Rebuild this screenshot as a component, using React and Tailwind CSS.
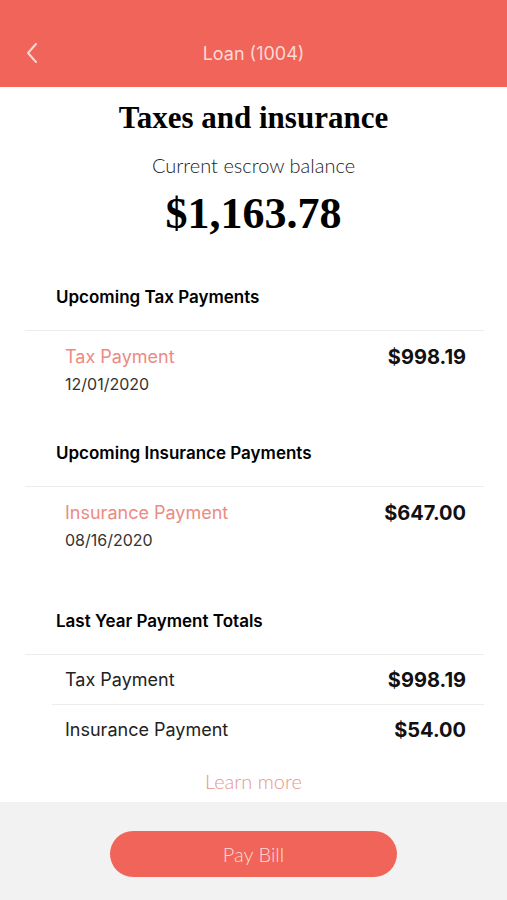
const sans = "font-['Inter','Liberation_Sans',sans-serif]";
const gill = "font-['Lato','Open_Sans',sans-serif]";
const serif = "font-['Liberation_Serif','Times_New_Roman',serif]";

function Section({ title, children }) {
  return (
    <div>
      <div className={`${sans} pl-[56px] pb-[23px] text-[17px] font-semibold text-black leading-[20px]`}>{title}</div>
      <div className="ml-[25px] mr-[23px] border-t border-[#ececec]" />
      {children}
    </div>
  );
}

function UpcomingRow({ label, date, amount, pb }) {
  return (
    <div className={`${sans} flex justify-between pl-[65px] pr-[41px] pt-[14px] ${pb}`}>
      <div>
        <div className="text-[18px] leading-[24px] text-[#ec8a83]">{label}</div>
        <div className="mt-[5px] text-[16px] leading-[20px] text-[#333]">{date}</div>
      </div>
      <div className="text-[20px] leading-[24px] font-bold text-[#111]">{amount}</div>
    </div>
  );
}

export default function App() {
  return (
    <div className="flex h-[900px] w-[507px] flex-col bg-white">
      <header className="relative flex h-[87px] items-end justify-center bg-[#f06459] pb-[21px]">
        <svg className="absolute left-[25px] top-[42px]" width="14" height="22" viewBox="0 0 14 22" fill="none">
          <path d="M11 2 L3 11 L11 20" stroke="#fbd9d4" strokeWidth="2" strokeLinecap="round" strokeLinejoin="round" />
        </svg>
        <div className={`${sans} text-[18px] leading-[24px] text-[#fcd9d4]`}>Loan (1004)</div>
      </header>

      <main className="flex-1">
        <h1 className={`${serif} pt-[13px] text-center text-[31px] font-bold leading-[36px] text-black`}>Taxes and insurance</h1>
        <div className={`${gill} mt-[16px] text-center text-[20px] font-light leading-[26px] text-[#222]`}>Current escrow balance</div>
        <div className={`${serif} mt-[11px] text-center text-[44px] font-bold leading-[50px] text-black`}>$1,163.78</div>

        <div className="mt-[48px]">
          <Section title="Upcoming Tax Payments">
            <UpcomingRow label="Tax Payment" date="12/01/2020" amount="$998.19" pb="pb-[49px]" />
          </Section>
          <Section title="Upcoming Insurance Payments">
            <UpcomingRow label="Insurance Payment" date="08/16/2020" amount="$647.00" pb="pb-[61px]" />
          </Section>
          <Section title="Last Year Payment Totals">
            <div className={`${sans} flex h-[49px] items-center justify-between pl-[65px] pr-[41px] text-[18px]`}>
              <span className="text-[#222]">Tax Payment</span>
              <span className="text-[20px] font-bold text-[#111]">$998.19</span>
            </div>
            <div className="ml-[52px] mr-[23px] border-t border-[#ececec]" />
            <div className={`${sans} flex h-[49px] items-center justify-between pl-[65px] pr-[41px] text-[18px]`}>
              <span className="text-[#222]">Insurance Payment</span>
              <span className="text-[20px] font-bold text-[#111]">$54.00</span>
            </div>
          </Section>
          <div className={`${gill} mt-[14px] text-center text-[20px] font-light leading-[26px] text-[#e9948c]`}>Learn more</div>
        </div>
      </main>

      <footer className="flex h-[98px] justify-center bg-[#f2f2f2] pt-[29px]">
        <button className={`${gill} h-[46px] w-[287px] rounded-full bg-[#f06459] text-[20px] font-light text-[#fcdcd7]`}>Pay Bill</button>
      </footer>
    </div>
  );
}
